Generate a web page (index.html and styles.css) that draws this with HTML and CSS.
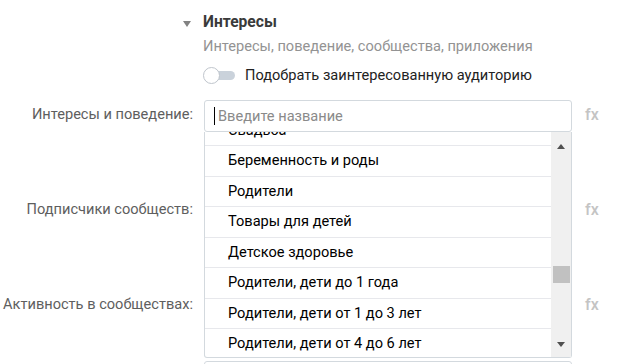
FILE: index.html
```html
<!DOCTYPE html>
<html lang="ru">
<head>
<meta charset="utf-8">
<link rel="stylesheet" href="styles.css">
</head>
<body>
<div class="page">
  <div class="section-head">
    <div class="head-label"><span class="caret"></span></div>
    <div class="head-body">
      <div class="title">Интересы</div>
      <div class="subtitle">Интересы, поведение, сообщества, приложения</div>
      <div class="toggle-row">
        <span class="toggle"><span class="track"></span><span class="knob"></span></span>
        <span class="toggle-text">Подобрать заинтересованную аудиторию</span>
      </div>
    </div>
  </div>

  <div class="form-row first">
    <div class="label">Интересы и поведение:</div>
    <div class="field">
      <div class="input"><span class="cursor"></span><span class="placeholder">Введите название</span></div>
      <div class="dropdown">
        <div class="list">
          <div class="list-inner">
            <div class="item">Свадьба</div>
            <div class="item">Беременность и роды</div>
            <div class="item">Родители</div>
            <div class="item">Товары для детей</div>
            <div class="item">Детское здоровье</div>
            <div class="item">Родители, дети до 1 года</div>
            <div class="item">Родители, дети от 1 до 3 лет</div>
            <div class="item last">Родители, дети от 4 до 6 лет</div>
          </div>
        </div>
        <div class="scrollbar">
          <div class="sb-btn up"><span class="arrow-up"></span></div>
          <div class="sb-track"><div class="sb-thumb"></div></div>
          <div class="sb-btn down"><span class="arrow-down"></span></div>
        </div>
      </div>
    </div>
    <div class="fx">fx</div>
  </div>

  <div class="form-row">
    <div class="label">Подписчики сообществ:</div>
    <div class="field"><div class="input"></div></div>
    <div class="fx">fx</div>
  </div>

  <div class="form-row">
    <div class="label">Активность в сообществах:</div>
    <div class="field"><div class="input"></div></div>
    <div class="fx">fx</div>
  </div>

  <div class="form-row extra">
    <div class="label"></div>
    <div class="field"><div class="input"></div></div>
  </div>
</div>
</body>
</html>
```

FILE: styles.css
```css
* { box-sizing: border-box; }
html, body { margin: 0; padding: 0; background: #fff; }
body {
  font-family: Roboto, "Open Sans", "Liberation Sans", sans-serif;
  font-size: 14.6px;
  color: #000;
  overflow: hidden;
  height: 364px;
}
.page { padding-top: 12px; }

.section-head { display: flex; }
.head-label {
  width: 193px;
  margin-right: 10px;
  display: flex;
  justify-content: flex-end;
  padding-right: 2px;
  padding-top: 9px;
}
.caret {
  width: 0; height: 0;
  border-left: 4px solid transparent;
  border-right: 4px solid transparent;
  border-top: 6px solid #828282;
}
.title {
  font-weight: bold;
  color: #3a3a3a;
  line-height: 20px;
  font-size: 15.6px;
}
.subtitle {
  color: #939393;
  line-height: 20px;
  margin-top: 4px;
}
.toggle-row {
  display: flex;
  align-items: center;
  margin-top: 9px;
  height: 20px;
}
.toggle {
  position: relative;
  width: 32px;
  height: 17px;
  margin-right: 10px;
}
.track {
  position: absolute;
  left: 6px; right: 0; top: 4px;
  height: 9px;
  border-radius: 5px;
  background: #cad2db;
}
.knob {
  position: absolute;
  left: 0; top: 0;
  width: 17px; height: 17px;
  border-radius: 50%;
  background: #fff;
  border: 1px solid #bfc5cc;
}
.toggle-text { color: #222; }

.form-row {
  display: flex;
  align-items: center;
  height: 32px;
  margin-bottom: 63px;
}
.form-row.first { margin-top: 15px; position: relative; z-index: 2; }
.form-row.extra { margin-top: -24px; height: 3px; margin-bottom: 0; align-items: flex-start; }
.form-row.extra .field { height: 3px; overflow: hidden; }
.label {
  width: 193px;
  margin-right: 11px;
  text-align: right;
  color: #5e5e5e;
  margin-top: -4px;
}
.field {
  position: relative;
  width: 368px;
  height: 32px;
}
.input {
  height: 32px;
  border: 1px solid #d3d9de;
  border-radius: 3px;
  background: #fff;
  display: flex;
  align-items: center;
  padding-left: 9px;
}
.cursor {
  width: 1px;
  height: 18px;
  background: #000;
  margin-right: 3px;
}
.placeholder { color: #8a8a8a; }
.fx {
  margin-left: 13px;
  color: #c4c4c4;
  font-size: 16px;
  font-weight: 500;
  margin-top: -4px;
}

.dropdown {
  position: absolute;
  left: 0; right: 0;
  top: 32px;
  height: 226px;
  background: #fff;
  border: 1px solid #d3d9de;
  border-top: none;
  border-radius: 0 0 3px 3px;
  display: flex;
}
.list {
  flex: 1;
  overflow: hidden;
}
.list-inner { margin-top: -16.5px; }
.item {
  height: 30.5px;
  line-height: 29.5px;
  border-bottom: 1px solid #e7e8ec;
  padding-left: 23px;
  color: #000;
  white-space: nowrap;
}
.item.last { border-bottom: none; }

.scrollbar {
  width: 20px;
  background: #f0f0f0;
  display: flex;
  flex-direction: column;
}
.sb-btn {
  display: flex;
  align-items: center;
  justify-content: center;
}
.sb-btn.up { height: 28px; }
.sb-btn.down { height: 25px; }
.arrow-up {
  width: 0; height: 0;
  border-left: 4.5px solid transparent;
  border-right: 4.5px solid transparent;
  border-bottom: 5px solid #505050;
}
.arrow-down {
  width: 0; height: 0;
  border-left: 4.5px solid transparent;
  border-right: 4.5px solid transparent;
  border-top: 5px solid #505050;
}
.sb-track { flex: 1; padding: 106px 1.5px 0; }
.sb-thumb { height: 17px; background: #c1c1c1; }
```
